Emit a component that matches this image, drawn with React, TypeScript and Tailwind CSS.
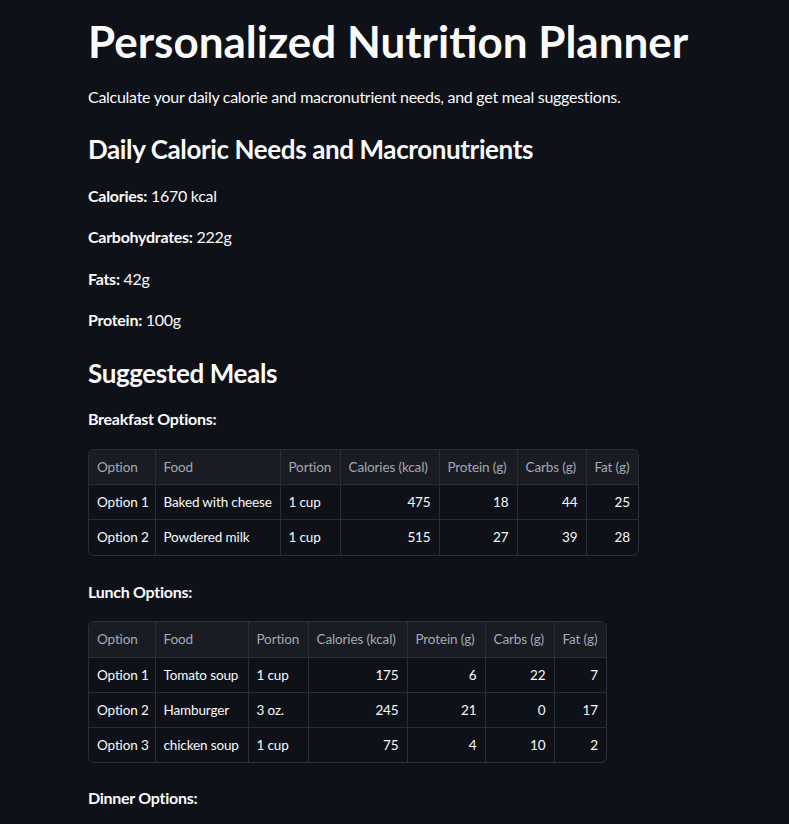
import React from 'react';

// Meal table data
type Meal = {
  option: string;
  food: string;
  portion: string;
  calories: number;
  protein: number;
  carbs: number;
  fat: number;
};

const breakfast: Meal[] = [
  { option: 'Option 1', food: 'Baked with cheese', portion: '1 cup', calories: 475, protein: 18, carbs: 44, fat: 25 },
  { option: 'Option 2', food: 'Powdered milk', portion: '1 cup', calories: 515, protein: 27, carbs: 39, fat: 28 },
];

const lunch: Meal[] = [
  { option: 'Option 1', food: 'Tomato soup', portion: '1 cup', calories: 175, protein: 6, carbs: 22, fat: 7 },
  { option: 'Option 2', food: 'Hamburger', portion: '3 oz.', calories: 245, protein: 21, carbs: 0, fat: 17 },
  { option: 'Option 3', food: 'chicken soup', portion: '1 cup', calories: 75, protein: 4, carbs: 10, fat: 2 },
];

const headers = ['Option', 'Food', 'Portion', 'Calories (kcal)', 'Protein (g)', 'Carbs (g)', 'Fat (g)'];

function MealTable({ rows, widths, tableClass }: { rows: Meal[]; widths: number[]; tableClass: string }) {
  return (
    <div className="inline-block rounded-md border border-[#2a2d35] overflow-hidden">
      <table className={`border-collapse text-[13.5px] tracking-[-0.01em] table-fixed ${tableClass}`}>
        <colgroup>
          {widths.map((w, i) => (
            <col key={i} style={{ width: w }} />
          ))}
        </colgroup>
        <thead>
          <tr className="bg-[#1a1c24] h-[35px]">
            {headers.map((h, i) => (
              <th
                key={h}
                className={`font-normal text-left text-[#a3a8b4] border-[#2a2d35] px-2 whitespace-nowrap overflow-hidden ${
                  i > 0 ? 'border-l' : ''
                }`}
              >
                {h}
              </th>
            ))}
          </tr>
        </thead>
        <tbody>
          {rows.map((r) => (
            <tr key={r.option} className="h-[35px] border-t border-[#2a2d35]">
              <td className="px-2 whitespace-nowrap">{r.option}</td>
              <td className="px-2 whitespace-nowrap border-l border-[#2a2d35]">{r.food}</td>
              <td className="px-2 whitespace-nowrap border-l border-[#2a2d35]">{r.portion}</td>
              <td className="px-2 text-right border-l border-[#2a2d35]">{r.calories}</td>
              <td className="px-2 text-right border-l border-[#2a2d35]">{r.protein}</td>
              <td className="px-2 text-right border-l border-[#2a2d35]">{r.carbs}</td>
              <td className="px-2 text-right border-l border-[#2a2d35]">{r.fat}</td>
            </tr>
          ))}
        </tbody>
      </table>
    </div>
  );
}

export default function App() {
  return (
    <div className="min-h-[824px] bg-[#0e1117] text-[#fafafa] font-['Lato',sans-serif]">
      <div className="pl-[88px] pr-[40px] pt-[13px]">
        <h1 className="text-[44px] font-bold leading-[1.2] py-[2px]">
          Personalized Nutrition Planner
        </h1>

        <p className="mt-[14px] text-[16px] leading-[1.6] tracking-[-0.017em]">
          Calculate your daily calorie and macronutrient needs, and get meal suggestions.
        </p>

        <h2 className="mt-[18px] text-[26px] font-bold leading-[1.2] py-[7px] tracking-[-0.015em]">
          Daily Caloric Needs and Macronutrients
        </h2>

        <div className="mt-[10px] flex flex-col gap-[16px] text-[16px] leading-[1.6] tracking-[-0.017em]">
          <p><span className="font-bold">Calories:</span> 1670 kcal</p>
          <p><span className="font-bold">Carbohydrates:</span> 222g</p>
          <p><span className="font-bold">Fats:</span> 42g</p>
          <p><span className="font-bold">Protein:</span> 100g</p>
        </div>

        <h2 className="mt-[18px] text-[26px] font-bold leading-[1.2] py-[7px] tracking-[-0.015em]">
          Suggested Meals
        </h2>

        <p className="mt-[10px] text-[16px] leading-[1.6] font-bold tracking-[-0.017em]">Breakfast Options:</p>
        <div className="mt-[17px]">
          <MealTable rows={breakfast} widths={[66, 125, 60, 99, 78, 69, 52]} tableClass="w-[549px]" />
        </div>

        <p className="mt-[17px] text-[16px] leading-[1.6] font-bold tracking-[-0.017em]">Lunch Options:</p>
        <div className="mt-[17px]">
          <MealTable rows={lunch} widths={[66, 93, 60, 99, 78, 69, 52]} tableClass="w-[517px]" />
        </div>

        <p className="mt-[16px] text-[16px] leading-[1.6] font-bold tracking-[-0.017em]">Dinner Options:</p>
      </div>
    </div>
  );
}
